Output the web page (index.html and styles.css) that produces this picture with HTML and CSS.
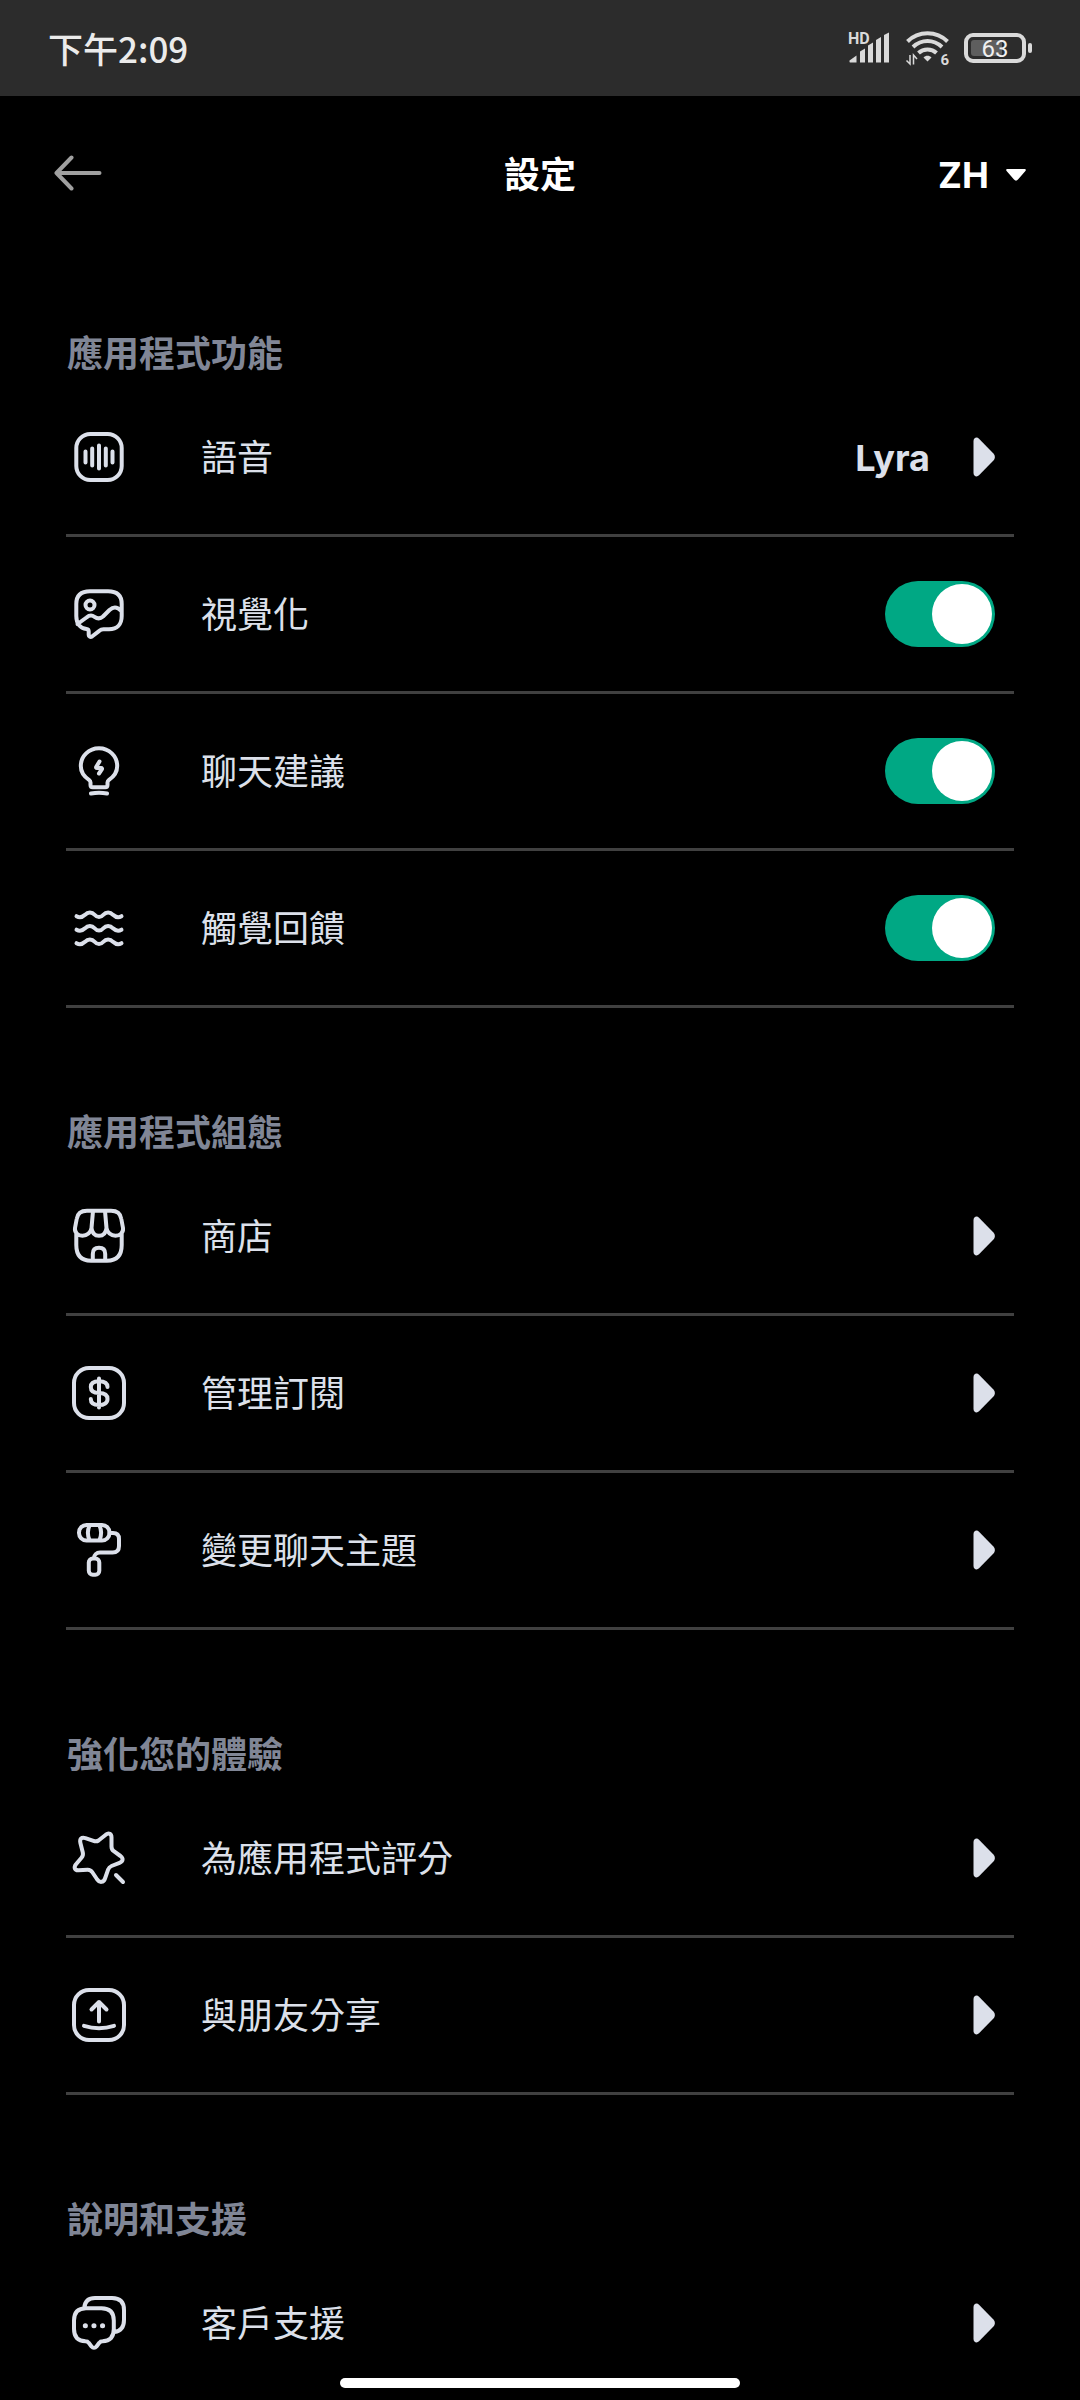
FILE: index.html
```html
<!DOCTYPE html>
<html lang="zh-Hant">
<head>
<meta charset="utf-8">
<meta name="viewport" content="width=device-width, initial-scale=1">
<title>設定</title>
<link rel="stylesheet" href="styles.css">
</head>
<body>
<svg class="sprite" aria-hidden="true">
  <symbol id="chevron" viewBox="0 0 22 40"><path d="M0.500 4C0.500 0.800 3.800-0.500 6 1.700L20.200 16.200C22.400 18.500 22.400 21.500 20.200 23.800L6 38.300C3.800 40.500 0.500 39.200 0.500 36Z" fill="currentColor"/></symbol>
</svg>
<div class="app">
  <div class="status">
    <span class="time">下午2:09</span>
    <div class="status-icons">
      <svg class="signal" viewBox="0 0 42 32" aria-label="HD">
        <text class="hd" x="0" y="12">HD</text>
        <g fill="currentColor">
          <path d="M1.500 30V28.500L8.500 23.500V30.500H2Z"/>
          <path d="M12 19.500L17 16.500V30.500H12Z"/>
          <path d="M20 13.500L25 10.500V30.500H20Z"/>
          <path d="M28 8L33 5V30.500H28Z"/>
          <path d="M36 3L41 0.500V30.500H36Z"/>
        </g>
      </svg>
      <svg class="wifi" viewBox="0 0 44 36" aria-label="Wi-Fi 6">
        <g fill="none" stroke="currentColor" stroke-width="4">
          <path d="M2.500 11.500C13.500 0.500 31.500 0.500 42.500 11.500"/>
          <path d="M8 17C16.500 9 28.500 9 37 17"/>
          <path d="M13.500 23C18.500 18.300 26.500 18.300 31.500 23"/>
        </g>
        <path d="M18.500 27.500C20.500 25.300 24.500 25.300 26.500 27.500L22.500 31.500Z" fill="currentColor"/>
        <path d="M5 25V34L1.500 30.500M8.500 34.500V25L12 29" fill="none" stroke="currentColor" stroke-width="1.500"/>
        <text class="gen" x="35.500" y="34.500">6</text>
      </svg>
      <svg class="battery" viewBox="0 0 70 32" aria-label="63%">
        <rect x="2" y="3" width="58" height="26" rx="7" fill="none" stroke="currentColor" stroke-width="4"/>
        <rect x="7" y="8" width="31" height="16" rx="3" fill="#5e5e5e"/>
        <rect x="64" y="11" width="4" height="10" rx="2" fill="currentColor"/>
        <text class="level" x="31" y="25" text-anchor="middle">63</text>
      </svg>
    </div>
  </div>

  <header class="topbar">
    <button class="back" type="button" aria-label="返回">
      <svg viewBox="0 0 48 36"><path d="M45.500 18H2.500M17.500 2.500L2.500 18L17.500 33.500" fill="none" stroke="currentColor" stroke-width="4" stroke-linecap="round" stroke-linejoin="round"/></svg>
    </button>
    <h1 class="title">設定</h1>
    <div class="language">
      <select class="language-select" aria-label="語言"><option>ZH</option></select>
      <svg class="caret" viewBox="0 0 20 12" aria-hidden="true"><path d="M1.500 0H18.500C19.900 0 20.200 1.200 19.400 2L12 10.600C10.800 12 9.200 12 8 10.600L0.600 2C-0.200 1.200 0.100 0 1.500 0Z" fill="currentColor"/></svg>
    </div>
  </header>

  <main class="content">
    <section class="group">
      <h2 class="group-title">應用程式功能</h2>
      <a class="row" href="#voice">
        <svg class="icon" viewBox="0 0 66 66"><rect x="10.300" y="10" width="45.400" height="46" rx="14"/><path d="M19.500 27.500V38.500M26.200 24.500V41.500M33 21.500V44.500M39.800 24.500V41.500M46.500 27.500V38.500"/></svg>
        <span class="label">語音</span><span class="value">Lyra</span><svg class="chevron"><use href="#chevron"/></svg>
      </a>
      <div class="row">
        <svg class="icon" viewBox="0 0 66 66"><path d="M24 10.300H42C51 10.300 55.700 14.500 55.700 23V35C55.700 43.500 51 48.300 43 48.300H37.500C36 48.300 34.500 48.800 33.300 49.800L26 55.500C24.500 56.500 22.700 55.700 22.700 54V50.500C22.700 49 22 48.300 20.500 48.100C14 47.300 10.300 42.500 10.300 35V23C10.300 14.500 15 10.300 24 10.300ZM11.500 43L20.500 36.500C23.500 34 26 34 28.500 35.800C31.500 38 34 38.200 37 35.500L43.500 29C47.500 25.500 51 25.500 55.200 30"/><circle cx="24" cy="24" r="4.500"/></svg>
        <label class="label" for="visual">視覺化</label><input class="switch" id="visual" type="checkbox" role="switch" checked>
      </div>
      <div class="row">
        <svg class="icon" viewBox="0 0 66 66"><path d="M24.500 47V44.500C24.500 43.300 24 42.500 23 41.800C18 38.500 14.800 33.800 14.800 28C14.800 18 23 10.200 33 10.200S51.200 18 51.200 28C51.200 33.800 48 38.500 43 41.800C42 42.500 41.500 43.300 41.500 44.500V47C41.500 48.500 40.800 49.200 39.300 49.200H26.700C25.200 49.200 24.500 48.500 24.500 47ZM25 55.500C30 54.500 36 54.500 41 55.500M33.500 23.500L30.300 28.700C29.800 29.600 30.200 30 31 30H35C36 30 36.300 30.600 35.800 31.400L33 35.500"/></svg>
        <label class="label" for="suggest">聊天建議</label><input class="switch" id="suggest" type="checkbox" role="switch" checked>
      </div>
      <div class="row">
        <svg class="icon" viewBox="0 0 66 66"><path d="M10.500 21.200c3 1.800 6 1 8.500-1.400c2.800-3 7-3 9.600 0c2.600 3 6.200 3 8.800 0c2.600-3 6.800-3 9.600 0c2.500 2.400 5.500 3.200 8.500 1.400M10.500 34.700c3 1.800 6 1 8.500-1.400c2.800-3 7-3 9.600 0c2.600 3 6.200 3 8.800 0c2.600-3 6.800-3 9.600 0c2.500 2.400 5.500 3.200 8.500 1.400M10.500 48.200c3 1.800 6 1 8.500-1.400c2.800-3 7-3 9.600 0c2.600 3 6.200 3 8.800 0c2.600-3 6.800-3 9.600 0c2.500 2.400 5.500 3.200 8.500 1.400"/></svg>
        <label class="label" for="haptic">觸覺回饋</label><input class="switch" id="haptic" type="checkbox" role="switch" checked>
      </div>
    </section>

    <section class="group">
      <h2 class="group-title">應用程式組態</h2>
      <a class="row" href="#store">
        <svg class="icon" viewBox="0 0 66 66"><path d="M21 7.800H45C51.500 7.800 54.500 10.500 55.300 16L57 25C57.600 29.500 54 32.800 49.500 32.800S41 29.500 40.500 25C40 29.500 37.500 32.800 33 32.800S26 29.500 25.500 25C25 29.500 21 32.800 16.500 32.800S8.400 29.500 9 25L10.700 16C11.500 10.500 14.500 7.800 21 7.800ZM27 8L25.500 25M39 8L40.500 25M10.300 31V42C10.300 52.500 15 57.700 25 57.700H41C51 57.700 55.700 52.500 55.700 42V31M26.800 57V51C26.800 47 29 44.800 33 44.800S39.200 47 39.200 51V57"/></svg>
        <span class="label">商店</span><svg class="chevron"><use href="#chevron"/></svg>
      </a>
      <a class="row" href="#subscription">
        <svg class="icon" viewBox="0 0 66 66"><rect x="8" y="8" width="50" height="50" rx="15"/><path d="M33 18.500V47.500M41.500 27C41.500 23 38.500 21.200 33 21.200C27.500 21.200 24.800 23 24.800 27C24.800 31.500 28 33 33 33C38.500 33 41.500 34.800 41.500 39C41.500 43 38 45 33 45C28 45 24.800 43.200 24.800 39"/></svg>
        <span class="label">管理訂閱</span><svg class="chevron"><use href="#chevron"/></svg>
      </a>
      <a class="row" href="#theme">
        <svg class="icon" viewBox="0 0 66 66"><rect x="13" y="8" width="30.500" height="15.500" rx="7.500"/><path d="M23.500 8.500C21.500 13 21.500 18.500 23.500 23M33.500 8.500C35.500 13 35.500 18.500 33.500 23M43.500 16H47C51 16 53 18 53 22V29C53 33.500 51 35.500 46.500 35.500H34C30.500 35.500 28 38 28 41"/><rect x="22.800" y="41.500" width="10.500" height="16.300" rx="4"/></svg>
        <span class="label">變更聊天主題</span><svg class="chevron"><use href="#chevron"/></svg>
      </a>
    </section>

    <section class="group">
      <h2 class="group-title">強化您的體驗</h2>
      <a class="row" href="#rate">
        <svg class="icon" viewBox="0 0 66 66"><path d="M32.500 15.500L39.800 9.700C42.800 7.500 45.500 8.800 45.500 12.500V21.500C45.500 23.800 46 25 47.800 26.200L54.500 31C57.600 33.400 57.200 36.300 53.500 37.800L45.500 41C43.500 41.800 42.800 42.700 42 44.800L39 53.500C37.600 57.600 33.700 58 31.200 54.500L26.500 47.500C25 45.200 24 44.600 21.500 44.700L12.500 45.200C8.500 45.400 7.600 42.300 10 39.200L15.500 32.800C17.300 30.700 17.400 30 16.800 27.500L14.400 18C13.400 13.700 15.500 12 19.400 13.100L27.500 15.800C29.500 16.600 30.900 16.600 32.500 15.500ZM50 50L57 57"/></svg>
        <span class="label">為應用程式評分</span><svg class="chevron"><use href="#chevron"/></svg>
      </a>
      <a class="row" href="#share">
        <svg class="icon" viewBox="0 0 66 66"><rect x="8" y="8" width="50" height="50" rx="15"/><path d="M33 39.500V20M25.500 27.500L33 20L40.500 27.500M18 43.800C28 47 38 47 48 43.800"/></svg>
        <span class="label">與朋友分享</span><svg class="chevron"><use href="#chevron"/></svg>
      </a>
    </section>

    <section class="group">
      <h2 class="group-title">說明和支援</h2>
      <a class="row" href="#support">
        <svg class="icon" viewBox="0 0 66 66"><path d="M20 18.200H35.500C44 18.200 47.800 22.500 47.800 30.500V39C47.800 47 44 51 36.500 51.200C35.300 51.200 34 51.800 33.300 52.800L30.500 56.500C29 58.300 27 58.300 25.500 56.500L22.700 52.800C22 51.800 20.700 51.200 19.500 51.200C12 51 8 47 8 39V30.500C8 22.500 12 18.200 20 18.200ZM18.300 17.500C19 11 22.500 8 29 8H46C54 8 58 12 58 20V30C58 37 55 41 48.500 42"/><path d="M19.300 35.800h.1M27.900 35.800h.1M36.500 35.800h.1" stroke-width="5"/></svg>
        <span class="label">客戶支援</span><svg class="chevron"><use href="#chevron"/></svg>
      </a>
    </section>
  </main>
  <div class="home-bar"></div>
</div>
</body>
</html>
```
FILE: styles.css
```css
* { box-sizing: border-box; }

body {
  margin: 0;
  background: #000;
  color: #dce0ea;
  font-family: Inter, "Noto Sans CJK TC", sans-serif;
  font-size: 36px;
  line-height: 52px;
}

.sprite { display: none; }

.app {
  position: relative;
  display: flex;
  flex-direction: column;
  height: 100vh;
  overflow: hidden;
}

.status {
  display: flex;
  flex: none;
  align-items: center;
  justify-content: space-between;
  height: 96px;
  padding: 0 46px 0 48px;
  background: #2c2c2c;
  color: #dadada;
}

.time {
  color: #ebebeb;
  font-family: "Noto Sans CJK TC", sans-serif;
  font-size: 35px;
  font-weight: 500;
}

.status-icons { display: flex; align-items: center; gap: 15px; }
.signal { width: 42px; height: 32px; overflow: visible; }
.wifi { width: 44px; height: 36px; overflow: visible; }
.battery { width: 70px; height: 32px; }

.hd, .gen, .level { fill: currentColor; font-family: Roboto, sans-serif; }
.hd { font-size: 16px; font-weight: 700; }
.gen { font-size: 15px; font-weight: 700; }
.level { font-size: 24px; font-weight: 400; fill: #f0f0f0; }

.topbar {
  display: grid;
  flex: none;
  grid-template-columns: 1fr auto 1fr;
  align-items: center;
  height: 154px;
  padding: 0 54px;
  color: #fff;
}

.back {
  width: 48px;
  height: 36px;
  padding: 0;
  border: 0;
  background: none;
  color: #a0a0a0;
}
.back svg { display: block; width: 48px; height: 36px; }

.title { margin: 0; padding-top: 3px; font-size: 36px; font-weight: 700; }

.language {
  display: flex;
  align-items: center;
  justify-content: flex-end;
  gap: 17px;
  padding-top: 3px;
}
.language-select {
  appearance: none;
  padding: 0;
  border: 0;
  background: none;
  color: #fff;
  font: inherit;
  font-weight: 700;
}
.caret { width: 20px; height: 12px; }

.content {
  display: flex;
  flex: 1;
  flex-direction: column;
  gap: 99px;
  min-height: 0;
  padding: 78px 66px 0;
  overflow-y: auto;
  scrollbar-width: none;
}

.group-title {
  margin: 0;
  padding-left: 1px;
  color: #808696;
  font-size: 36px;
  font-weight: 600;
}

.row {
  display: flex;
  align-items: center;
  height: 157px;
  padding-right: 19px;
  border-bottom: 3px solid #404040;
  color: inherit;
  text-decoration: none;
}

.icon {
  flex: none;
  width: 66px;
  height: 66px;
  margin-right: 69px;
  fill: none;
  stroke: currentColor;
  stroke-width: 4;
  stroke-linecap: round;
  stroke-linejoin: round;
}

.label, .value { padding-top: 2px; }
.label { flex: 1; }
.value { margin-right: 43px; font-weight: 700; }
.chevron { flex: none; width: 22px; height: 40px; }

.switch {
  display: flex;
  appearance: none;
  align-items: center;
  justify-content: flex-end;
  width: 110px;
  height: 66px;
  margin: 0;
  padding: 3px;
  border-radius: 33px;
  background: #00a884;
}
.switch::before {
  content: "";
  width: 60px;
  height: 60px;
  border-radius: 50%;
  background: #fff;
}
.switch:not(:checked) { justify-content: flex-start; background: #404040; }

.home-bar {
  position: absolute;
  bottom: 12px;
  left: 50%;
  width: 400px;
  height: 10px;
  margin-left: -200px;
  border-radius: 5px;
  background: #fff;
}
```
